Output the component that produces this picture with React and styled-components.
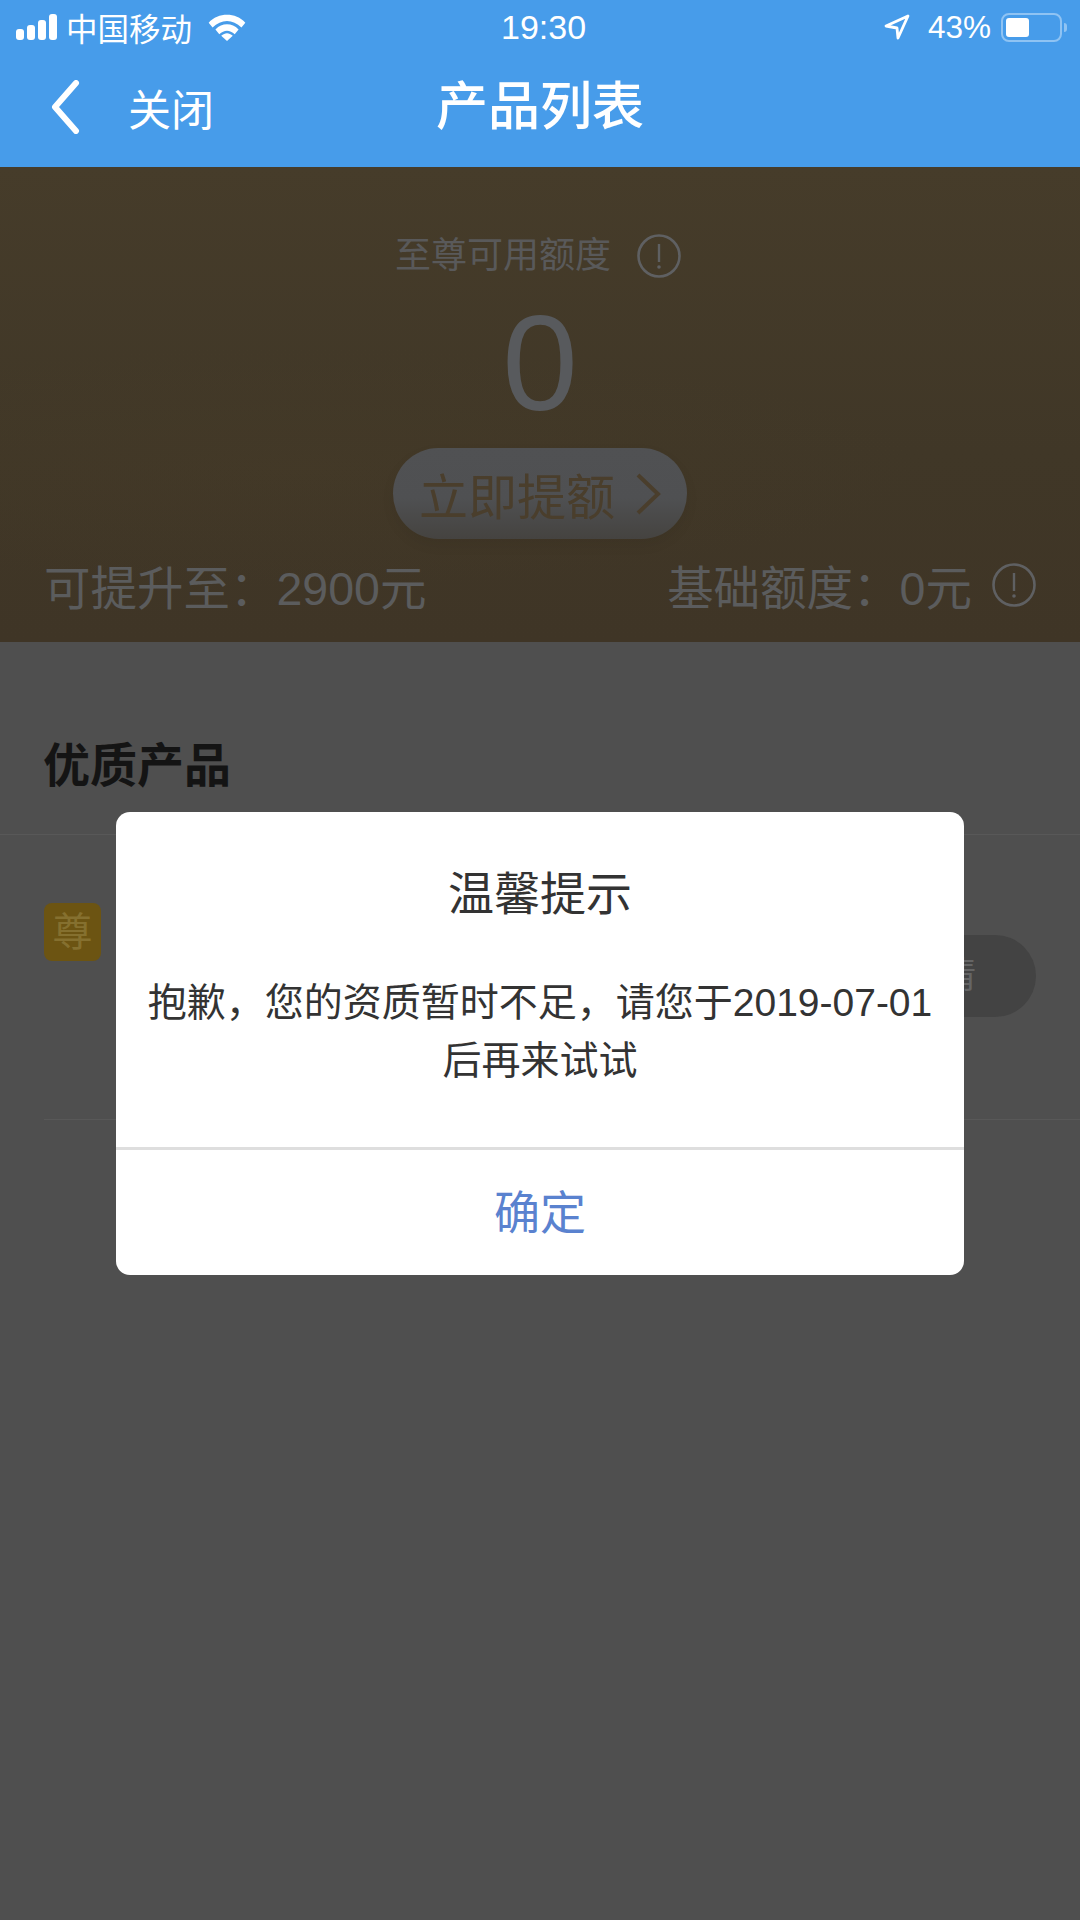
import styled, { createGlobalStyle } from 'styled-components';

const FONT = '"Liberation Sans", "Noto Sans CJK SC", sans-serif';

export default function App() {
  return (
    <>
      <Global />
      <Page>
        <Top>
          <StatusBar>
            <StatusSide>
              <Signal>
                {[11, 15, 20, 26].map((h) => (
                  <SignalBar key={h} $h={h} />
                ))}
              </Signal>
              <Carrier>中国移动</Carrier>
              <WifiIcon />
            </StatusSide>
            <Time>19:30</Time>
            <StatusSide $right>
              <LocationIcon />
              <Percent>43%</Percent>
              <Battery>
                <BatteryFill />
              </Battery>
              <BatteryCap />
            </StatusSide>
          </StatusBar>
          <NavBar>
            <BackIcon />
            <Close>关闭</Close>
            <NavTitle>产品列表</NavTitle>
          </NavBar>
        </Top>

        <Hero>
          <QuotaLabel>
            至尊可用额度
            <InfoIcon size={44} />
          </QuotaLabel>
          <Amount>0</Amount>
          <RaiseButton>
            立即提额
            <ChevronIcon />
          </RaiseButton>
          <HeroFooter>
            <FooterText>可提升至：2900元</FooterText>
            <FooterRight>
              <FooterText>基础额度：0元</FooterText>
              <InfoIcon size={44} />
            </FooterRight>
          </HeroFooter>
        </Hero>

        <SectionTitle>优质产品</SectionTitle>
        <Product>
          <Badge>尊</Badge>
          <DetailButton>查看详情</DetailButton>
        </Product>

        <Dialog>
          <DialogBody>
            <DialogTitle>温馨提示</DialogTitle>
            <DialogText>
              抱歉，您的资质暂时不足，请您于2019-07-01
              <br />
              后再来试试
            </DialogText>
          </DialogBody>
          <DialogAction>确定</DialogAction>
        </Dialog>
      </Page>
    </>
  );
}

function WifiIcon() {
  return (
    <Wifi viewBox="0 0 38 28">
      <path d="M0 9 C10 -2 28 -2 38 9 L34 14 C25 5 13 5 4 14 Z" fill="#fff" />
      <path d="M7 16 C14 9 24 9 31 16 L27 21 C22 16 16 16 11 21 Z" fill="#fff" />
      <path d="M13 22.5 C17 19 21 19 25 22.5 L19 28 Z" fill="#fff" />
    </Wifi>
  );
}

function LocationIcon() {
  return (
    <Location viewBox="0 0 26 28">
      <path d="M24 3 L2 13 L13 15 L14 25 Z" fill="none" stroke="#fff" strokeWidth="2.8" strokeLinejoin="round" />
    </Location>
  );
}

function BackIcon() {
  return (
    <Back viewBox="0 0 30 54">
      <path d="M26 3 L5 27 L26 51" fill="none" stroke="#fff" strokeWidth="6" strokeLinecap="round" strokeLinejoin="round" />
    </Back>
  );
}

function ChevronIcon() {
  return (
    <Chevron viewBox="0 0 26 42">
      <path d="M3 2 L23 21 L3 40" fill="none" stroke="#4a3e2c" strokeWidth="4" />
    </Chevron>
  );
}

function InfoIcon({ size }) {
  return (
    <Info viewBox="0 0 44 44" width={size} height={size}>
      <circle cx="22" cy="22" r="20.5" fill="none" stroke="#5f6062" strokeWidth="2.6" />
      <path d="M22 10 V28" stroke="#5f6062" strokeWidth="2.4" />
      <circle cx="22" cy="33" r="1.8" fill="#5f6062" />
    </Info>
  );
}

const Global = createGlobalStyle`
  html, body {
    margin: 0;
    padding: 0;
    background: #4f4f4f;
  }
`;

const Page = styled.div`
  position: relative;
  width: 1080px;
  height: 1920px;
  overflow: hidden;
  background: #4f4f4f;
  font-family: ${FONT};
`;

const Top = styled.header`
  height: 167px;
  background: #479cea;
  color: #fff;
`;

const StatusBar = styled.div`
  height: 54px;
  padding: 0 13px 0 16px;
  display: flex;
  align-items: center;
  justify-content: space-between;
  position: relative;
`;

const StatusSide = styled.div`
  display: flex;
  align-items: center;
  gap: ${(p) => (p.$right ? '0' : '9px')};
`;

const Signal = styled.div`
  display: flex;
  align-items: flex-end;
  gap: 3px;
`;

const SignalBar = styled.span`
  width: 8px;
  height: ${(p) => p.$h}px;
  border-radius: 3px;
  background: #fff;
`;

const Carrier = styled.span`
  font-size: 31.5px;
  margin-right: 7px;
`;

const Wifi = styled.svg`
  width: 38px;
  height: 27px;
`;

const Time = styled.span`
  position: absolute;
  left: 501px;
  font-size: 34px;
`;

const Location = styled.svg`
  width: 26px;
  height: 28px;
  margin-right: 18px;
`;

const Percent = styled.span`
  font-size: 31.5px;
  margin-right: 10px;
`;

const Battery = styled.div`
  width: 61px;
  height: 29px;
  box-sizing: border-box;
  padding: 3px;
  border: 2px solid #8fc3f3;
  border-radius: 8px;
`;

const BatteryFill = styled.div`
  width: 23px;
  height: 100%;
  border-radius: 3px;
  background: #fff;
`;

const BatteryCap = styled.div`
  width: 3px;
  height: 9px;
  margin-left: 2px;
  border-radius: 0 3px 3px 0;
  background: #8fc3f3;
`;

const NavBar = styled.nav`
  height: 113px;
  position: relative;
  padding: 0 0 8px 50px;
  box-sizing: border-box;
  display: flex;
  align-items: center;
`;

const Back = styled.svg`
  width: 30px;
  height: 54px;
`;

const Close = styled.span`
  margin-left: 48px;
  font-size: 43px;
`;

const NavTitle = styled.h1`
  position: absolute;
  left: 0;
  right: 0;
  top: 20px;
  margin: 0;
  text-align: center;
  font-size: 52px;
  line-height: 66px;
  font-weight: 500;
`;

const Hero = styled.section`
  height: 475px;
  box-sizing: border-box;
  padding-top: 67px;
  display: flex;
  flex-direction: column;
  align-items: center;
  background:
    radial-gradient(ellipse 620px 120px at 300px 300px, rgba(72, 60, 40, 0.35), rgba(72, 60, 40, 0)),
    linear-gradient(180deg, #463c2a 0%, #403727 60%, #3f3526 100%);
`;

const QuotaLabel = styled.div`
  display: flex;
  align-items: center;
  gap: 26px;
  margin-left: -4px;
  font-size: 36px;
  line-height: 44px;
  color: #59595a;
`;

const Info = styled.svg`
  display: block;
`;

const Amount = styled.div`
  margin-top: 17px;
  font-size: 136px;
  line-height: 136px;
  color: #585a5d;
`;

const RaiseButton = styled.div`
  margin-top: 17px;
  width: 294px;
  height: 91px;
  display: flex;
  align-items: center;
  justify-content: center;
  gap: 20px;
  border-radius: 46px;
  font-size: 49px;
  color: #4a3e2c;
  background: linear-gradient(180deg, #505153 0%, #4f5052 55%, #454340 100%);
  box-shadow: 0 6px 14px rgba(0, 0, 0, 0.06);
`;

const Chevron = styled.svg`
  width: 26px;
  height: 42px;
`;

const HeroFooter = styled.div`
  width: 100%;
  box-sizing: border-box;
  margin-top: 12px;
  padding: 0 44px;
  display: flex;
  align-items: center;
  justify-content: space-between;
`;

const FooterRight = styled.div`
  display: flex;
  align-items: center;
  gap: 20px;
`;

const FooterText = styled.span`
  font-size: 46.5px;
  color: #5b5c5d;
`;

const SectionTitle = styled.h2`
  margin: 0;
  height: 193px;
  box-sizing: border-box;
  padding: 96px 0 0 43px;
  border-bottom: 1px solid #585858;
  font-size: 47px;
  line-height: 56px;
  font-weight: 700;
  color: #141414;
`;

const Product = styled.div`
  height: 285px;
  margin-left: 44px;
  box-sizing: border-box;
  display: flex;
  align-items: flex-start;
  justify-content: space-between;
  padding: 68px 44px 0 0;
  border-bottom: 1px solid #585858;
`;

const Badge = styled.span`
  width: 57px;
  height: 58px;
  border-radius: 8px;
  background: #6c5412;
  color: #85702f;
  font-size: 40px;
  line-height: 58px;
  text-align: center;
`;

const DetailButton = styled.span`
  margin-top: 32px;
  width: 264px;
  height: 82px;
  border-radius: 41px;
  background: #434343;
  color: #656565;
  font-size: 36px;
  line-height: 82px;
  text-align: center;
`;

const Dialog = styled.div`
  position: absolute;
  left: 116px;
  top: 812px;
  width: 848px;
  height: 463px;
  display: flex;
  flex-direction: column;
  border-radius: 14px;
  background: #fff;
  overflow: hidden;
`;

const DialogBody = styled.div`
  height: 338px;
  box-sizing: border-box;
  padding-top: 54px;
  text-align: center;
  border-bottom: 3px solid #dedede;
`;

const DialogTitle = styled.h3`
  margin: 0 0 52px;
  font-size: 46px;
  line-height: 56px;
  font-weight: 400;
  color: #333;
`;

const DialogText = styled.p`
  margin: 0;
  font-size: 39px;
  line-height: 58px;
  color: #333;
  white-space: nowrap;
`;

const DialogAction = styled.div`
  flex: 1;
  display: flex;
  align-items: center;
  justify-content: center;
  padding-bottom: 8px;
  font-size: 46px;
  color: #5a82cf;
`;
